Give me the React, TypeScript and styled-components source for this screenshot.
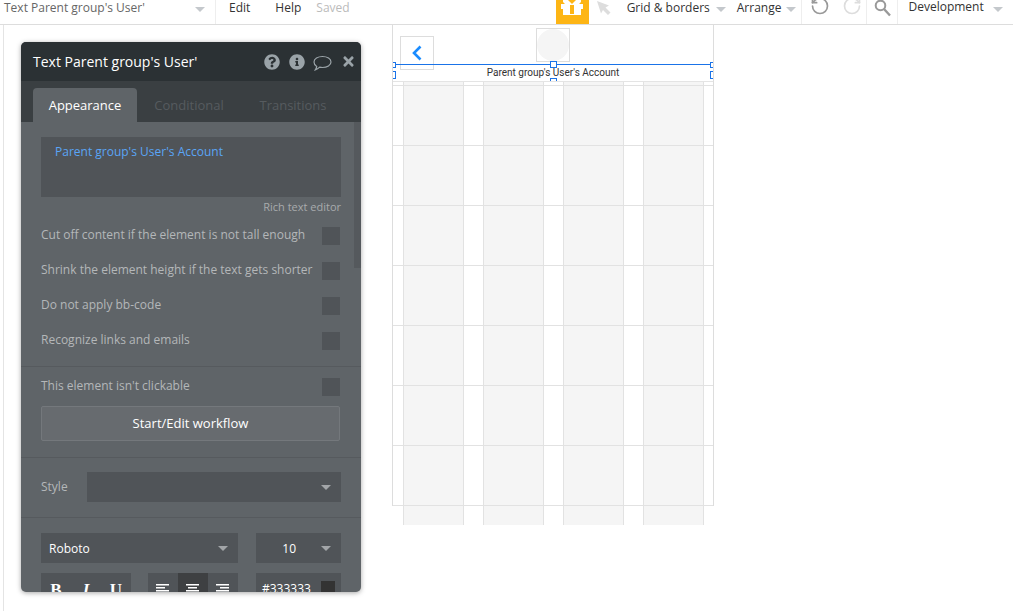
import React from 'react';
import styled, { createGlobalStyle } from 'styled-components';
import { FaInfoCircle, FaQuestionCircle, FaTimes } from 'react-icons/fa';
import { RotateCcw, RotateCw } from 'lucide-react';

const GlobalStyle = createGlobalStyle`
  html, body {
    margin: 0;
    padding: 0;
    height: 100%;
    overflow: hidden;
    background: #fff;
    font-family: "Open Sans", "Liberation Sans", sans-serif;
  }
  * { box-sizing: border-box; }
`;

const Page = styled.div`
  width: 1013px;
  height: 611px;
  position: relative;
  overflow: hidden;
`;

const TopBar = styled.header`
  height: 25px;
  display: flex;
  align-items: flex-start;
  border-bottom: 1px solid #ddd;
  font-size: 12px;
  color: #333;
  overflow: hidden;
`;

const TitleCell = styled.div`
  flex: none;
  width: 216px;
  height: 24px;
  padding: 0 10px 0 4px;
  display: flex;
  justify-content: space-between;
  border-right: 1px solid #eee;
  color: #666;
  line-height: 15px;
`;

const Caret = styled.span<{ $gap?: number }>`
  flex: none;
  width: 0;
  height: 0;
  margin-top: 7px;
  margin-left: ${({ $gap = 0 }) => $gap}px;
  border-left: 5px solid transparent;
  border-right: 5px solid transparent;
  border-top: 5px solid #c4c8cc;
`;

const MenuItem = styled.span<{ $left: number; $muted?: boolean; $raised?: boolean }>`
  flex: none;
  margin-left: ${({ $left }) => $left}px;
  margin-top: ${({ $raised }) => ($raised ? -1 : 0)}px;
  line-height: 15px;
  color: ${({ $muted }) => ($muted ? '#bbb' : '#333')};
  white-space: nowrap;
`;

const GiftButton = styled.div`
  flex: none;
  margin-left: 206px;
  width: 33px;
  height: 24px;
  background: #fdb515;
  svg { display: block; margin-left: 4px; }
`;

const CursorIcon = styled.svg`
  margin-left: 7px;
  flex: none;
`;

const ToolCell = styled.div<{ $width: number; $divided?: boolean; $left?: number }>`
  flex: none;
  width: ${({ $width }) => $width}px;
  height: 24px;
  margin-left: ${({ $left = 0 }) => $left}px;
  display: flex;
  justify-content: center;
  border-left: ${({ $divided }) => ($divided ? '1px solid #eee' : 'none')};
  svg { margin-top: -4px; }
`;

const Workspace = styled.main`
  height: 586px;
  padding-left: 392px;
  position: relative;
  &::before {
    content: '';
    position: absolute;
    left: 3px;
    top: 0;
    bottom: 0;
    width: 1px;
    background: #e4e4e4;
  }
`;

const Canvas = styled.section`
  position: relative;
  width: 322px;
  height: 481px;
  border: 1px solid #ddd;
  border-top: none;
`;

const ColumnGrid = styled.div`
  position: absolute;
  left: 10px;
  top: 56px;
  width: 301px;
  height: 444px;
  display: grid;
  grid-template-columns: repeat(4, 61px);
  column-gap: 19px;
`;

const Column = styled.div`
  background: #f5f5f5;
  border-left: 1px solid #e2e2e2;
  border-right: 1px solid #e2e2e2;
`;

const RowLines = styled.div`
  position: absolute;
  left: 0;
  right: 0;
  top: 56px;
  border-top: 1px solid #e4e4e4;
  padding-top: 3px;
`;

const RowLine = styled.div`
  height: 60px;
  border-top: 1px solid #e2e2e2;
  &:last-child { height: 1px; }
`;

const BackBox = styled.div`
  position: absolute;
  left: 7px;
  top: 11px;
  width: 34px;
  height: 34px;
  border: 1px solid #ddd;
  background: #fff;
  display: flex;
  align-items: center;
  justify-content: center;
`;

const AvatarBox = styled.div`
  position: absolute;
  left: 143px;
  top: 3px;
  width: 34px;
  height: 34px;
  border: 1px solid #ddd;
  background: #fff;
  &::after {
    content: '';
    display: block;
    width: 100%;
    height: 100%;
    border-radius: 50%;
    background: #f5f5f5;
  }
`;

const Selection = styled.div`
  position: absolute;
  left: 0;
  top: 39px;
  width: 320px;
  height: 17px;
  border-top: 1px solid #1a73e8;
  text-align: center;
  font: 10px/15px Roboto, "Liberation Sans", sans-serif;
  color: #333;
  clip-path: inset(-10px 0 0 0);
`;

const Handle = styled.i<{ $x: number; $y: number; $w: number; $h: number }>`
  position: absolute;
  left: ${({ $x }) => $x}px;
  top: ${({ $y }) => $y}px;
  width: ${({ $w }) => $w}px;
  height: ${({ $h }) => $h}px;
  background: #fff;
  border: 1px solid #1a73e8;
`;

const Panel = styled.aside`
  position: absolute;
  left: 21px;
  top: 17px;
  width: 340px;
  height: 550px;
  border-radius: 5px;
  overflow: hidden;
  background: #5f6468;
  box-shadow: 0 1px 5px rgba(0, 0, 0, 0.35);
`;

const PanelHeader = styled.div`
  height: 39px;
  padding: 0 5px 0 12px;
  background: #2b3134;
  color: #fff;
  display: flex;
  align-items: center;
  justify-content: space-between;
  font-size: 14px;
`;

const HeaderIcons = styled.div`
  display: flex;
  align-items: center;
  gap: 9px;
  color: #9aa3a8;
  font-size: 16px;
  svg { display: block; }
`;

const CommentIcon = styled.svg`
  margin: 3px 0 0 -1px;
`;

const Tabs = styled.div`
  height: 41px;
  background: #3a3f42;
  padding: 7px 0 0 12px;
  display: flex;
  font-size: 13px;
`;

const Tab = styled.div<{ $active?: boolean; $width: number }>`
  width: ${({ $width }) => $width}px;
  height: 34px;
  border-radius: 4px 4px 0 0;
  text-align: center;
  line-height: 35px;
  background: ${({ $active }) => ($active ? '#5f6468' : 'transparent')};
  color: ${({ $active }) => ($active ? '#fff' : '#565b5f')};
`;

const PanelBody = styled.div`
  position: relative;
  padding-top: 15px;
  font-size: 12px;
  color: #b4b7b9;
`;

const ScrollThumb = styled.div`
  position: absolute;
  right: 0;
  top: 0;
  width: 7px;
  height: 146px;
  background: #55595d;
`;

const Section = styled.div<{ $pad: string }>`
  padding: ${({ $pad }) => $pad};
  border-bottom: 1px solid #565a5e;
`;

const TextEditor = styled.div`
  width: 300px;
  height: 60px;
  padding: 6px 14px;
  background: #505458;
  color: #5aa5f5;
  font-size: 12px;
  line-height: 18px;
`;

const RichLink = styled.div`
  width: 300px;
  margin-top: 1px;
  text-align: right;
  font-size: 11px;
  line-height: 17px;
  color: #a8abad;
`;

const CheckRow = styled.div<{ $gap?: number }>`
  width: 299px;
  height: 18px;
  margin-top: ${({ $gap = 17 }) => $gap}px;
  display: flex;
  align-items: flex-start;
  justify-content: space-between;
  line-height: 16px;
  white-space: nowrap;
`;

const CheckBox = styled.span`
  flex: none;
  width: 18px;
  height: 18px;
  background: #505458;
`;

const WorkflowButton = styled.div`
  width: 299px;
  height: 35px;
  margin-top: 10px;
  background: #676b6f;
  border: 1px solid #74787c;
  border-radius: 2px;
  color: #fff;
  font-size: 13px;
  line-height: 33px;
  text-align: center;
`;

const StyleRow = styled.div`
  display: flex;
  align-items: center;
  justify-content: space-between;
  width: 300px;
`;

const StyleLabel = styled.span`
  margin-bottom: 2px;
`;

const Select = styled.div<{ $width: number; $end?: boolean }>`
  width: ${({ $width }) => $width}px;
  height: 30px;
  padding: 0 10px 0 8px;
  background: #505458;
  color: #fff;
  font-size: 12px;
  display: flex;
  align-items: center;
  justify-content: ${({ $end }) => ($end ? 'flex-end' : 'space-between')};
  gap: 25px;
  ${Caret} {
    margin-top: 1px;
    border-top-color: #a2a5a8;
  }
`;

const FontArea = styled.div`
  width: 320px;
  padding: 15px 0 0 20px;
  display: grid;
  grid-template-columns: 197px 85px;
  justify-content: space-between;
  row-gap: 10px;
`;

const FormatRow = styled.div`
  width: 197px;
  display: flex;
  justify-content: space-between;
`;

const ButtonGroup = styled.div`
  width: 90px;
  height: 30px;
  display: flex;
  background: #505458;
`;

const FormatButton = styled.div<{ $active?: boolean; $italic?: boolean }>`
  width: 30px;
  padding-top: 3px;
  display: flex;
  align-items: center;
  justify-content: center;
  color: #fff;
  background: ${({ $active }) => ($active ? '#3e4042' : 'transparent')};
  font: ${({ $italic }) => ($italic ? 'italic' : 'normal')} bold 17px "Liberation Serif", serif;
`;

const ColorField = styled.div`
  height: 30px;
  padding: 0 6px;
  background: #505458;
  color: #fff;
  font-size: 12px;
  display: flex;
  align-items: center;
  justify-content: space-between;
`;

const Swatch = styled.span`
  width: 14px;
  height: 14px;
  background: #333;
`;

const checks = [
  'Cut off content if the element is not tall enough',
  'Shrink the element height if the text gets shorter',
  'Do not apply bb-code',
  'Recognize links and emails',
];

const AlignIcon = ({ lines }: { lines: [number, number][] }) => (
  <svg width="14" height="12" viewBox="0 0 14 12">
    {lines.map(([x, w], i) => (
      <rect key={i} x={x} y={i * 3} width={w} height="1.5" fill="#fff" />
    ))}
  </svg>
);

export default function App() {
  return (
    <Page>
      <GlobalStyle />
      <TopBar>
        <TitleCell>
          Text Parent group's User'
          <Caret />
        </TitleCell>
        <MenuItem $left={13}>Edit</MenuItem>
        <MenuItem $left={25}>Help</MenuItem>
        <MenuItem $left={15} $muted>
          Saved
        </MenuItem>
        <GiftButton>
          <svg width="24" height="16" viewBox="0 0 24 16">
            <path d="M1 4h22v5h-2v6H3V9H1z" fill="#fff" />
            <path d="M3 0h5l4 4 4-4h5v2l-3 3H6L3 2z" fill="#fff" />
            <rect x="10" y="5" width="4" height="9" fill="#fdb515" />
          </svg>
        </GiftButton>
        <CursorIcon width="16" height="16" viewBox="0 0 16 16">
          <path d="M1 1l12 4.5-3.500 2 5 5-2.500 2.500-5-5L5 13.500z" fill="#ddd" />
        </CursorIcon>
        <MenuItem $left={15}>Grid &amp; borders</MenuItem>
        <Caret $gap={6} />
        <MenuItem $left={11}>Arrange</MenuItem>
        <Caret $gap={5} />
        <ToolCell $width={36} $divided $left={5}>
          <RotateCcw size={20} color="#999" strokeWidth={2} />
        </ToolCell>
        <ToolCell $width={29}>
          <RotateCw size={20} color="#ddd" strokeWidth={2} />
        </ToolCell>
        <ToolCell $width={31} $divided>
          <svg width="17" height="21" viewBox="0 -4 17 21">
            <circle cx="6.500" cy="5.500" r="4.800" fill="none" stroke="#999" strokeWidth="2" />
            <path d="M10 9l6 6.500" stroke="#999" strokeWidth="2.400" />
          </svg>
        </ToolCell>
        <ToolCell $width={11} $divided />
        <MenuItem $left={0} $raised>
          Development
        </MenuItem>
        <Caret $gap={9} />
      </TopBar>
      <Workspace>
        <Canvas>
          <ColumnGrid>
            <Column />
            <Column />
            <Column />
            <Column />
          </ColumnGrid>
          <RowLines>
            {Array.from({ length: 8 }, (_, i) => (
              <RowLine key={i} />
            ))}
          </RowLines>
          <BackBox>
            <svg width="12" height="16" viewBox="0 0 12 16">
              <path d="M9.500 1.500L3 8l6.500 6.500" fill="none" stroke="#1a8cff" strokeWidth="2.600" />
            </svg>
          </BackBox>
          <AvatarBox />
          <Selection>
            Parent group's User's Account
            <Handle $x={-3} $y={-3} $w={6} $h={6} />
            <Handle $x={-3} $y={6} $w={6} $h={8} />
            <Handle $x={157} $y={-4} $w={7} $h={7} />
            <Handle $x={157} $y={13} $w={7} $h={4} />
            <Handle $x={317} $y={-3} $w={6} $h={6} />
            <Handle $x={317} $y={6} $w={6} $h={8} />
          </Selection>
        </Canvas>
        <Panel>
          <PanelHeader>
            Text Parent group's User'
            <HeaderIcons>
              <FaQuestionCircle />
              <FaInfoCircle />
              <CommentIcon width="19" height="17" viewBox="0 0 19 17">
                <path
                  d="M9.500 1.500c4.700 0 8.500 2.400 8.500 5.500s-3.800 5.500-8.500 5.500c-1 0-1.900-.1-2.800-.3-1.200 1.200-2.700 2.200-4.400 2.600.8-1 1.300-2 1.400-3.400C2 10.400 1 8.800 1 7c0-3.100 3.800-5.500 8.500-5.500z"
                  fill="none"
                  stroke="#9aa3a8"
                  strokeWidth="1.200"
                />
              </CommentIcon>
              <FaTimes size={15} />
            </HeaderIcons>
          </PanelHeader>
          <Tabs>
            <Tab $active $width={104}>
              Appearance
            </Tab>
            <Tab $width={104}>Conditional</Tab>
            <Tab $width={104}>Transitions</Tab>
          </Tabs>
          <PanelBody>
            <ScrollThumb />
            <Section $pad="0 20px 16px">
              <TextEditor>Parent group's User's Account</TextEditor>
              <RichLink>Rich text editor</RichLink>
              {checks.map((label, i) => (
                <CheckRow key={label} $gap={i === 0 ? 12 : 17}>
                  {label}
                  <CheckBox />
                </CheckRow>
              ))}
            </Section>
            <Section $pad="11px 20px 16px">
              <CheckRow $gap={0}>
                This element isn't clickable
                <CheckBox />
              </CheckRow>
              <WorkflowButton>Start/Edit workflow</WorkflowButton>
            </Section>
            <Section $pad="14px 20px 15px">
              <StyleRow>
                <StyleLabel>Style</StyleLabel>
                <Select $width={254} $end>
                  <Caret />
                </Select>
              </StyleRow>
            </Section>
            <FontArea>
              <Select $width={197}>
                Roboto
                <Caret />
              </Select>
              <Select $width={85} $end>
                10
                <Caret />
              </Select>
              <FormatRow>
                <ButtonGroup>
                  <FormatButton>B</FormatButton>
                  <FormatButton $italic>I</FormatButton>
                  <FormatButton>U</FormatButton>
                </ButtonGroup>
                <ButtonGroup>
                  <FormatButton>
                    <AlignIcon lines={[[0, 13], [0, 9], [0, 13], [0, 9]]} />
                  </FormatButton>
                  <FormatButton $active>
                    <AlignIcon lines={[[0, 13], [2, 9], [0, 13], [2, 9]]} />
                  </FormatButton>
                  <FormatButton>
                    <AlignIcon lines={[[0, 13], [4, 9], [0, 13], [4, 9]]} />
                  </FormatButton>
                </ButtonGroup>
              </FormatRow>
              <ColorField>
                #333333
                <Swatch />
              </ColorField>
            </FontArea>
          </PanelBody>
        </Panel>
      </Workspace>
    </Page>
  );
}
